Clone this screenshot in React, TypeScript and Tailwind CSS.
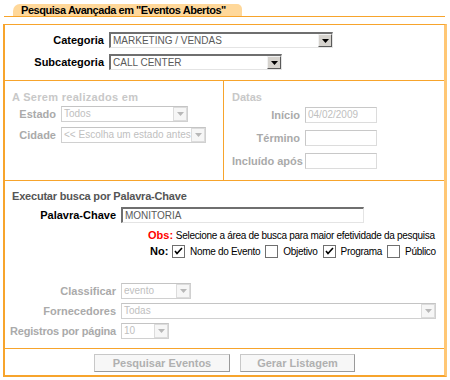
import React from 'react';

const ORANGE = 'border-[#f7a42c]';

const Arrow = ({ disabled }: { disabled?: boolean }) => (
  <svg width="7" height="4" viewBox="0 0 7 4">
    <path d="M0 0h7L3.5 4z" fill={disabled ? '#b8b8b8' : '#000'} />
  </svg>
);

const Select = ({ w, value, disabled }: { w: string; value: string; disabled?: boolean }) => (
  <div
    className={`flex h-[16px] shrink-0 items-stretch bg-white ${w} ${
      disabled
        ? 'border border-[#d0d0d0] border-t-[#c4c4c4]'
        : 'border-t-2 border-l-2 border-b border-r border-t-[#6f6f6f] border-l-[#6f6f6f] border-b-[#e4e4e4] border-r-[#e4e4e4]'
    }`}
  >
    <div
      className={`flex-1 overflow-hidden whitespace-nowrap pl-[2px] text-[10px] leading-[13px] ${
        disabled ? 'text-[#c0c0c0]' : 'text-[#5a5a5a]'
      }`}
    >
      {value}
    </div>
    <div
      className={`flex w-[14px] items-center justify-center ${
        disabled
          ? 'border border-[#dcdcdc] bg-[#f6f6f6]'
          : 'border border-t-[#f2f2f2] border-l-[#f2f2f2] border-b-[#5a5a5a] border-r-[#5a5a5a] bg-[#d6d3ce]'
      }`}
    >
      <Arrow disabled={disabled} />
    </div>
  </div>
);

const Input = ({ w, value, dark }: { w: string; value?: string; dark?: boolean }) => (
  <div
    className={`h-[16px] shrink-0 whitespace-nowrap bg-white pl-[2px] text-[10px] leading-[13px] ${w} ${
      dark
        ? 'border-t-2 border-l-2 border-b border-r border-t-[#6f6f6f] border-l-[#6f6f6f] border-b-[#e4e4e4] border-r-[#e4e4e4] text-[#5a5a5a]'
        : 'border border-[#dcdcdc] border-t-[#c8c8c8] border-l-[#c8c8c8] text-[#c0c0c0]'
    }`}
  >
    {value}
  </div>
);

const Check = ({ checked }: { checked?: boolean }) => (
  <div className="flex h-[13px] w-[13px] shrink-0 items-center justify-center border border-[#6f6f6f] bg-white">
    {checked && (
      <svg width="9" height="9" viewBox="0 0 9 9">
        <path d="M1 4l2 2.5L8 1" stroke="#000" strokeWidth="1.6" fill="none" />
      </svg>
    )}
  </div>
);

const Option = ({ checked, children }: { checked?: boolean; children: React.ReactNode }) => (
  <div className="mr-[5px] flex shrink-0 items-center">
    <Check checked={checked} />
    <span className="ml-[5px] tracking-[-0.3px]">{children}</span>
  </div>
);

const Label = ({ w, children, gray }: { w: string; children: React.ReactNode; gray?: boolean }) => (
  <div
    className={`${w} shrink-0 whitespace-nowrap pr-[5px] text-right text-[11px] font-bold ${
      gray ? 'text-[#aaaaaa]' : 'text-black'
    }`}
  >
    {children}
  </div>
);

const Button = ({ w, children }: { w: string; children: React.ReactNode }) => (
  <div
    className={`${w} flex h-[18px] items-center justify-center whitespace-nowrap border border-[#c8c8c8] border-b-[#9a9a9a] border-r-[#9a9a9a] bg-[#f7f7f7] text-[11px] font-bold text-[#b0b0b0]`}
  >
    {children}
  </div>
);

export default function App() {
  return (
    <div className="h-[380px] w-[450px] overflow-hidden bg-white font-['Liberation_Sans',Arial,sans-serif] leading-[13px]">
      {/* tab */}
      <div className={`ml-[4px] mr-[5px] flex h-[17px] items-end border-b ${ORANGE} pl-[9px]`}>
        <div className="flex h-[12px] w-[229px] shrink-0 items-center whitespace-nowrap rounded-tl-[7px] rounded-tr-[5px] bg-[#ffd89a] pl-[8px] text-[11px] font-bold tracking-[-0.45px] text-black">
          Pesquisa Avançada em "Eventos Abertos"
        </div>
      </div>

      {/* box */}
      <div className={`mx-[3px] mt-[7px] w-[444px] border-t border-l-2 border-b-2 ${ORANGE} border-r-[3px] border-r-[#ffc775]`}>
        {/* categoria */}
        <div className={`flex flex-col gap-[6px] border-b ${ORANGE} pt-[7px] pb-[10px]`}>
          <div className="flex items-center">
            <Label w="w-[104px]">Categoria</Label>
            <Select w="w-[224px]" value="MARKETING / VENDAS" />
          </div>
          <div className="flex items-center">
            <Label w="w-[104px]">Subcategoria</Label>
            <Select w="w-[173px]" value="CALL CENTER" />
          </div>
        </div>

        {/* local / datas */}
        <div className={`flex h-[100px] border-b ${ORANGE}`}>
          <div className={`w-[219px] border-r ${ORANGE} pt-[10px] pl-[7px]`}>
            <div className="h-[13px] whitespace-nowrap text-[11px] font-bold tracking-[0.3px] text-[#c8c8c8]">
              A Serem realizados em
            </div>
            <div className="mt-[2px] flex flex-col gap-[5px]">
              <div className="flex items-center">
                <Label w="w-[49px]" gray>Estado</Label>
                <Select w="w-[127px]" value="Todos" disabled />
              </div>
              <div className="flex items-center">
                <Label w="w-[49px]" gray>Cidade</Label>
                <Select w="w-[145px]" value="<< Escolha um estado antes" disabled />
              </div>
            </div>
          </div>
          <div className="flex-1 pt-[10px] pl-[8px]">
            <div className="h-[13px] text-[11px] font-bold text-[#c8c8c8]">Datas</div>
            <div className="mt-[3px] flex flex-col gap-[7px]">
              <div className="flex items-center">
                <Label w="w-[73px]" gray>Início</Label>
                <Input w="w-[72px]" value="04/02/2009" />
              </div>
              <div className="flex items-center">
                <Label w="w-[73px]" gray>Término</Label>
                <Input w="w-[72px]" />
              </div>
              <div className="flex items-center">
                <Label w="w-[73px]" gray>Incluído após</Label>
                <Input w="w-[72px]" />
              </div>
            </div>
          </div>
        </div>

        {/* palavra-chave */}
        <div className={`border-b ${ORANGE} pt-[9px] pb-[9px]`}>
          <div className="h-[13px] whitespace-nowrap pl-[7px] text-[11px] font-bold tracking-[-0.2px] text-[#555]">
            Executar busca por Palavra-Chave
          </div>
          <div className="mt-[4px] flex items-center">
            <Label w="w-[116px]">Palavra-Chave</Label>
            <Input w="w-[243px]" value="MONITORIA" dark />
          </div>
          <div className="mt-[6px] h-[13px] whitespace-nowrap pl-[143px] text-[10px] text-black">
            <span className="text-[11px] font-bold text-[#ff0000]">Obs:</span>{' '}
            <span className="tracking-[-0.3px]">Selecione a área de busca para maior efetividade da pesquisa</span>
          </div>
          <div className="mt-[3px] flex h-[13px] items-center whitespace-nowrap pl-[145px] text-[10px] text-black">
            <span className="w-[22px] shrink-0 text-[11px] font-bold">No:</span>
            <Option checked>Nome do Evento</Option>
            <Option>Objetivo</Option>
            <Option checked>Programa</Option>
            <Option>Público</Option>
          </div>

          <div className="mt-[25px] flex flex-col gap-[4px]">
            <div className="flex items-center">
              <Label w="w-[116px]" gray>Classificar</Label>
              <Select w="w-[70px]" value="evento" disabled />
            </div>
            <div className="flex items-center">
              <Label w="w-[116px]" gray>Fornecedores</Label>
              <Select w="w-[315px]" value="Todas" disabled />
            </div>
            <div className="flex items-center">
              <Label w="w-[116px]" gray>
                <span className="tracking-[-0.2px]">Registros por página</span>
              </Label>
              <Select w="w-[48px]" value="10" disabled />
            </div>
          </div>
        </div>

        {/* buttons */}
        <div className="flex h-[26px] items-start gap-[10px] pt-[5px] pl-[89px]">
          <Button w="w-[136px]">Pesquisar Eventos</Button>
          <Button w="w-[115px]">Gerar Listagem</Button>
        </div>
      </div>
    </div>
  );
}
